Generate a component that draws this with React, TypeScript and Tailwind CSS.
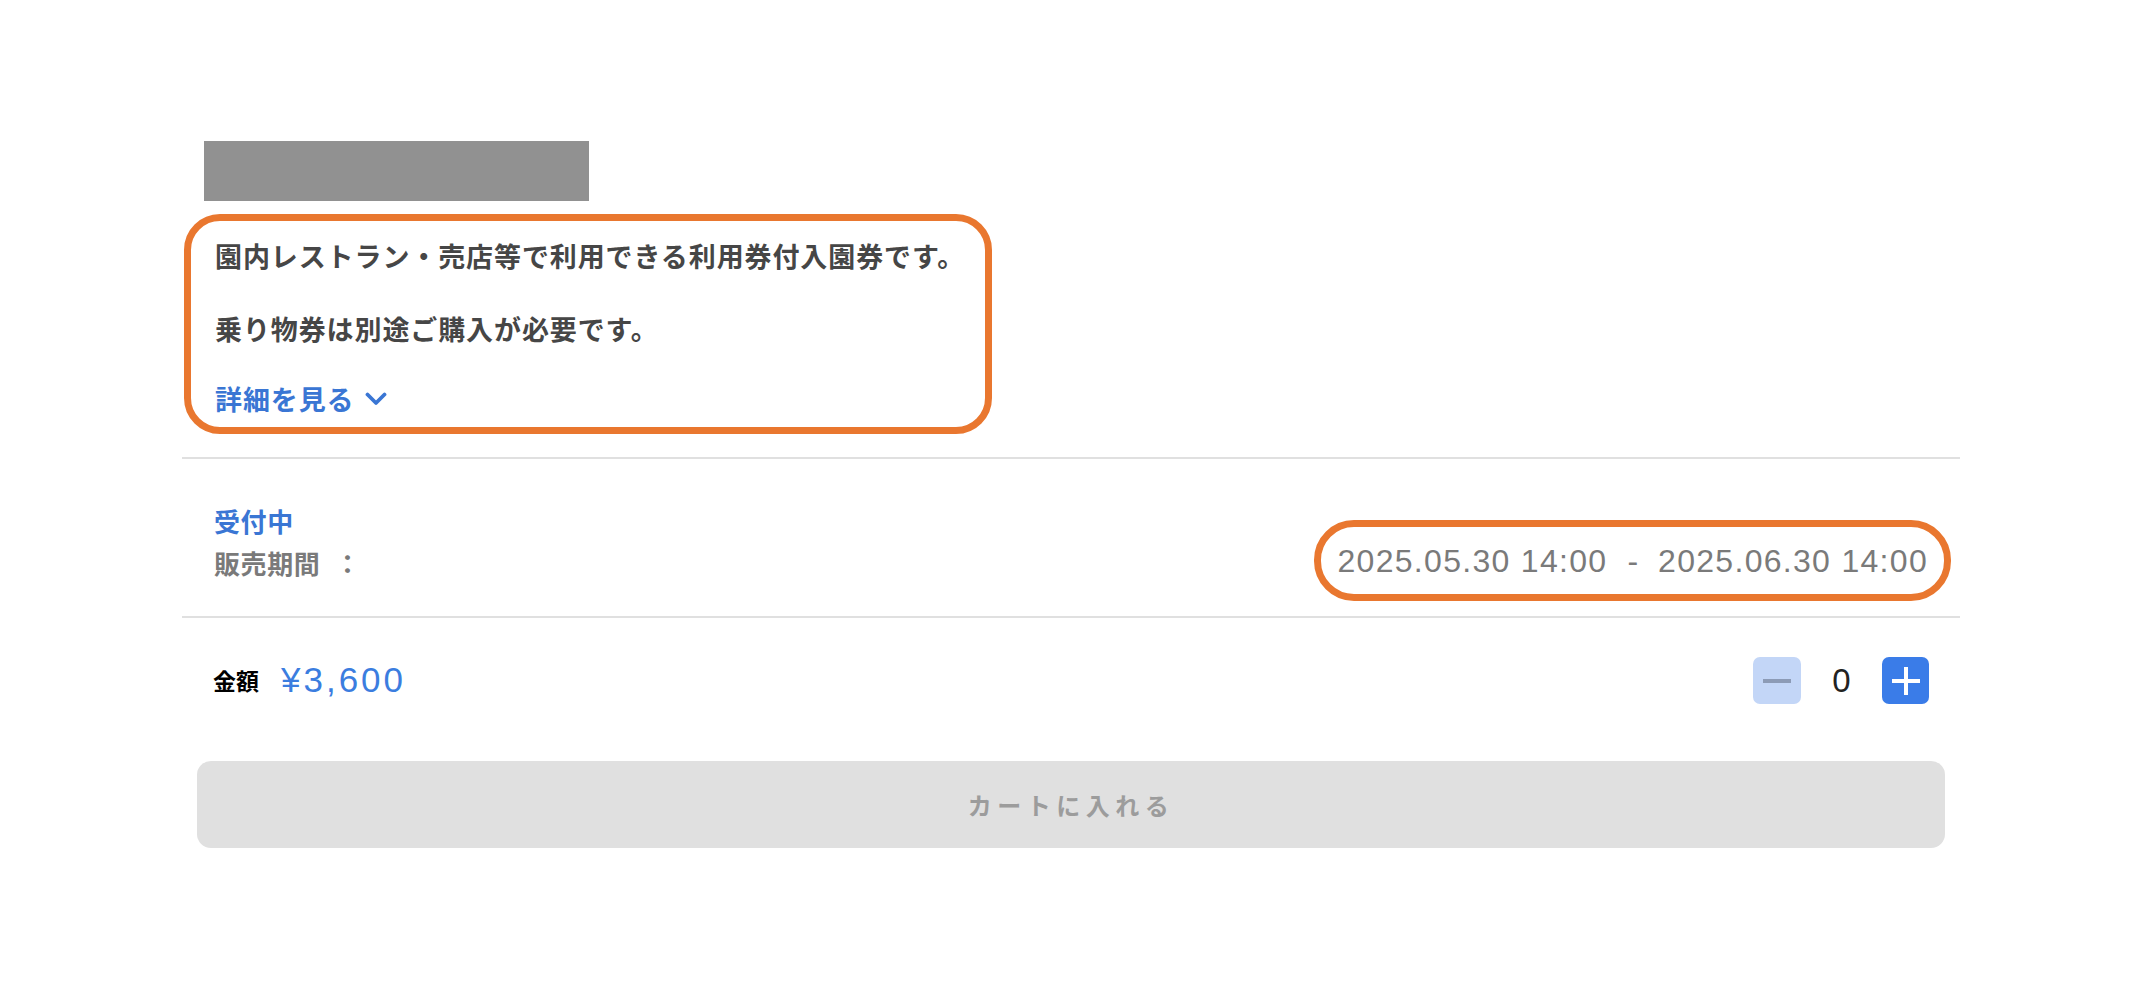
import React from "react";

const jp = "font-['Noto_Sans_CJK_JP',sans-serif]";
const num = "font-['Liberation_Sans','Noto_Sans_CJK_JP',sans-serif]";

function Chevron() {
  return (
    <svg width="22" height="14" viewBox="0 0 22 14" fill="none" className="ml-[10px]">
      <polyline points="2.5,2.5 11,11 19.5,2.5" stroke="#3a76d4" strokeWidth="3.8" strokeLinecap="round" strokeLinejoin="round" />
    </svg>
  );
}

export default function App() {
  return (
    <div className={`min-h-screen bg-white ${jp}`}>
      <div className="mx-auto w-[1778px] pt-[141px]">
        {/* title placeholder */}
        <div className="ml-[22px] h-[60px] w-[385px] bg-[#919191]" />

        {/* description */}
        <div className="ml-[2px] mt-[13px] flex h-[220px] w-[808px] flex-col rounded-[36px] border-[7px] border-[#e9772f] pl-[24px] pt-[17px]">
          <p className="text-[27px] font-bold leading-[36px] tracking-[0.9px] text-[#464646]">
            園内レストラン・売店等で利用できる利用券付入園券です。
          </p>
          <p className="mt-[37px] text-[27px] font-bold leading-[36px] tracking-[0.9px] text-[#464646]">
            乗り物券は別途ご購入が必要です。
          </p>
          <button className="mt-[34px] flex items-center text-[27px] font-bold leading-[36px] tracking-[0.9px] text-[#3a76d4]">
            詳細を見る
            <Chevron />
          </button>
        </div>

        <div className="mt-[23px] h-[2px] bg-[#e0e0e0]" />

        {/* sale period */}
        <div className="flex justify-between">
          <div className="pb-[32px] pl-[32px] pt-[41px]">
            <p className="text-[26px] font-bold leading-[42px] tracking-[0.6px] text-[#3a76d4]">受付中</p>
            <p className="flex text-[26px] font-bold leading-[42px] tracking-[0.6px] text-[#7a7a7a]">
              販売期間<span className="ml-[14px]">：</span>
            </p>
          </div>
          <div className={`mr-[9px] mt-[61px] flex h-[81px] items-center self-start rounded-[40px] border-[7px] border-[#e9772f] px-[16px] ${num}`}>
            <span className="text-[32px] leading-[36px] tracking-[1.3px] text-[#7a7a7a]">2025.05.30 14:00</span>
            <span className="px-[20px] text-[32px] leading-[36px] text-[#7a7a7a]">-</span>
            <span className="text-[32px] leading-[36px] tracking-[1.3px] text-[#7a7a7a]">2025.06.30 14:00</span>
          </div>
        </div>

        <div className="h-[2px] bg-[#e0e0e0]" />

        {/* price + quantity */}
        <div className="flex h-[125px] items-center justify-between pl-[31px] pr-[31px]">
          <div className="flex items-center">
            <span className="text-[23px] font-bold text-black">金額</span>
            <span className={`ml-[22px] text-[35px] tracking-[3px] text-[#3b7ddf] ${num}`}>¥3,600</span>
          </div>
          <div className="flex items-center">
            <button className="flex h-[47px] w-[48px] items-center justify-center rounded-[7px] bg-[#c3d6f7]">
              <span className="h-[4px] w-[28px] bg-[#8c9bb6]" />
            </button>
            <span className={`w-[81px] text-center text-[33px] text-[#222] ${num}`}>0</span>
            <button className="relative flex h-[47px] w-[47px] items-center justify-center rounded-[7px] bg-[#3a7ce8]">
              <span className="h-[4px] w-[28px] bg-white" />
              <span className="absolute h-[28px] w-[4px] bg-white" />
            </button>
          </div>
        </div>

        {/* add to cart */}
        <button className="mx-[15px] mt-[18px] flex h-[87px] w-[1748px] items-center justify-center rounded-[14px] bg-[#e0e0e0]">
          <span className="text-[24px] font-bold tracking-[5.5px] text-[#9c9c9c]">カートに入れる</span>
        </button>
      </div>
    </div>
  );
}
